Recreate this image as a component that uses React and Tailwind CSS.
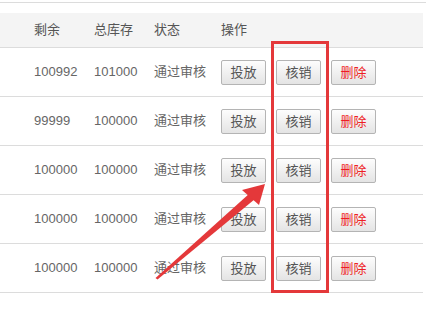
const rows = [
  { left: '100992', total: '101000' },
  { left: '99999', total: '100000' },
  { left: '100000', total: '100000' },
  { left: '100000', total: '100000' },
  { left: '100000', total: '100000' },
]

function Btn({ children, danger }) {
  return (
    <button
      className={
        'h-[25px] w-[45px] border border-[#b4b4b4] rounded-[2px] bg-gradient-to-b from-[#fdfdfd] to-[#e4e4e4] text-[13px] leading-none ' +
        (danger ? 'text-[#ee1d24]' : 'text-[#555]')
      }
    >
      {children}
    </button>
  )
}

export default function App() {
  return (
    <div
      className="relative w-[426px] h-[310px] bg-white text-[13px] text-[#666] overflow-hidden"
      style={{ fontFamily: '"Liberation Sans", "Noto Sans CJK SC", sans-serif' }}
    >
      <div className="mt-[2px] border-t border-[#dcdcdc]" />
      <div className="mt-[10px] w-[423px]">
        <div className="flex items-center h-[35px] bg-[#f4f4f4] border-b border-[#dcdcdc] pl-[34px] text-[#555]">
          <div className="w-[60px]">剩余</div>
          <div className="w-[60px]">总库存</div>
          <div className="w-[67px]">状态</div>
          <div>操作</div>
        </div>
        {rows.map((r, i) => (
          <div key={i} className="flex items-center h-[49px] border-b border-[#dcdcdc] pl-[34px]">
            <div className="w-[60px]">{r.left}</div>
            <div className="w-[60px]">{r.total}</div>
            <div className="w-[67px]">通过审核</div>
            <div className="flex gap-[10px]">
              <Btn>投放</Btn>
              <Btn>核销</Btn>
              <Btn danger>删除</Btn>
            </div>
          </div>
        ))}
      </div>
      <svg className="absolute inset-0" width="426" height="310" viewBox="0 0 426 310">
        <rect x="272.5" y="42.5" width="55" height="249" fill="none" stroke="#e4383a" strokeWidth="3" />
        <polygon points="155.5,278 157.5,279.5 255,199 250,193" fill="#e4383a" />
        <polygon points="265,184 242,190 259,205" fill="#e4383a" />
      </svg>
    </div>
  )
}
